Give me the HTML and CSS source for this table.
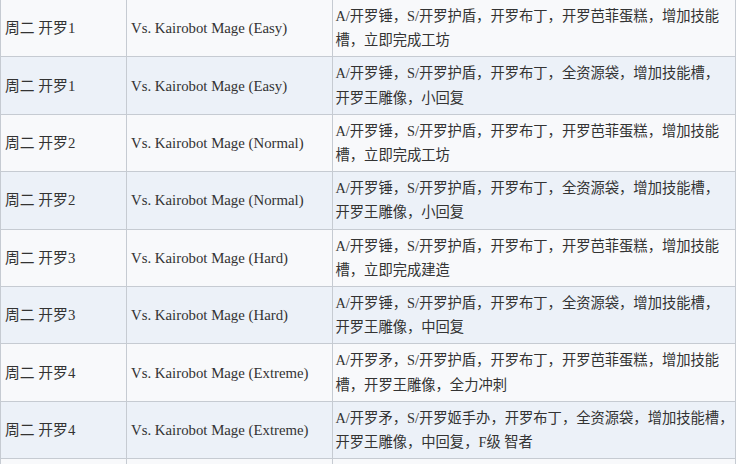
FILE: index.html
```html
<!DOCTYPE html>
<html lang="zh">
<head>
<meta charset="utf-8">
<title>开罗 Kairobot Mage</title>
<link rel="stylesheet" href="styles.css">
</head>
<body>
<table class="stage-table">
  <colgroup>
    <col class="col-day">
    <col class="col-battle">
    <col class="col-reward">
  </colgroup>
  <tbody>
    <tr class="row-odd">
      <td>周二 开罗1</td>
      <td>Vs. Kairobot Mage (Easy)</td>
      <td class="reward">A/开罗锤，S/开罗护盾，开罗布丁，开罗芭菲蛋糕，增加技能<br>槽，立即完成工坊</td>
    </tr>
    <tr class="row-even">
      <td>周二 开罗1</td>
      <td>Vs. Kairobot Mage (Easy)</td>
      <td class="reward">A/开罗锤，S/开罗护盾，开罗布丁，全资源袋，增加技能槽，<br>开罗王雕像，小回复</td>
    </tr>
    <tr class="row-odd">
      <td>周二 开罗2</td>
      <td>Vs. Kairobot Mage (Normal)</td>
      <td class="reward">A/开罗锤，S/开罗护盾，开罗布丁，开罗芭菲蛋糕，增加技能<br>槽，立即完成工坊</td>
    </tr>
    <tr class="row-even">
      <td>周二 开罗2</td>
      <td>Vs. Kairobot Mage (Normal)</td>
      <td class="reward">A/开罗锤，S/开罗护盾，开罗布丁，全资源袋，增加技能槽，<br>开罗王雕像，小回复</td>
    </tr>
    <tr class="row-odd">
      <td>周二 开罗3</td>
      <td>Vs. Kairobot Mage (Hard)</td>
      <td class="reward">A/开罗锤，S/开罗护盾，开罗布丁，开罗芭菲蛋糕，增加技能<br>槽，立即完成建造</td>
    </tr>
    <tr class="row-even">
      <td>周二 开罗3</td>
      <td>Vs. Kairobot Mage (Hard)</td>
      <td class="reward">A/开罗锤，S/开罗护盾，开罗布丁，全资源袋，增加技能槽，<br>开罗王雕像，中回复</td>
    </tr>
    <tr class="row-odd">
      <td>周二 开罗4</td>
      <td>Vs. Kairobot Mage (Extreme)</td>
      <td class="reward">A/开罗矛，S/开罗护盾，开罗布丁，开罗芭菲蛋糕，增加技能<br>槽，开罗王雕像，全力冲刺</td>
    </tr>
    <tr class="row-even">
      <td>周二 开罗4</td>
      <td>Vs. Kairobot Mage (Extreme)</td>
      <td class="reward">A/开罗矛，S/开罗姬手办，开罗布丁，全资源袋，增加技能槽，<br>开罗王雕像，中回复，F级 智者</td>
    </tr>
    <tr class="row-odd">
      <td>&nbsp;</td>
      <td>&nbsp;</td>
      <td class="reward">&nbsp;<br>&nbsp;</td>
    </tr>
  </tbody>
</table>
</body>
</html>
```
FILE: styles.css
```css
html, body {
  margin: 0;
  padding: 0;
  background: #ffffff;
}

body {
  overflow: hidden;
}

.stage-table {
  border-collapse: collapse;
  table-layout: fixed;
  width: 735px;
  margin-top: -1px;
  font-family: "Liberation Serif", "Noto Sans CJK SC", serif;
  font-size: 14.8px;
  color: #333333;
}

.col-day { width: 126px; }
.col-battle { width: 205.5px; }
.col-reward { width: 403.5px; }

.stage-table td {
  border: 1px solid #c6cbd2;
  padding: 4px 2px 4px 4px;
  line-height: 24.2px;
  vertical-align: middle;
  white-space: normal;
}

.stage-table td.reward {
  font-size: 14.3px;
  padding-left: 3px;
  padding-right: 0;
  white-space: nowrap;
}

.row-odd td {
  background: #f8f9fb;
}

.row-even td {
  background: #ecf1f8;
}
```
